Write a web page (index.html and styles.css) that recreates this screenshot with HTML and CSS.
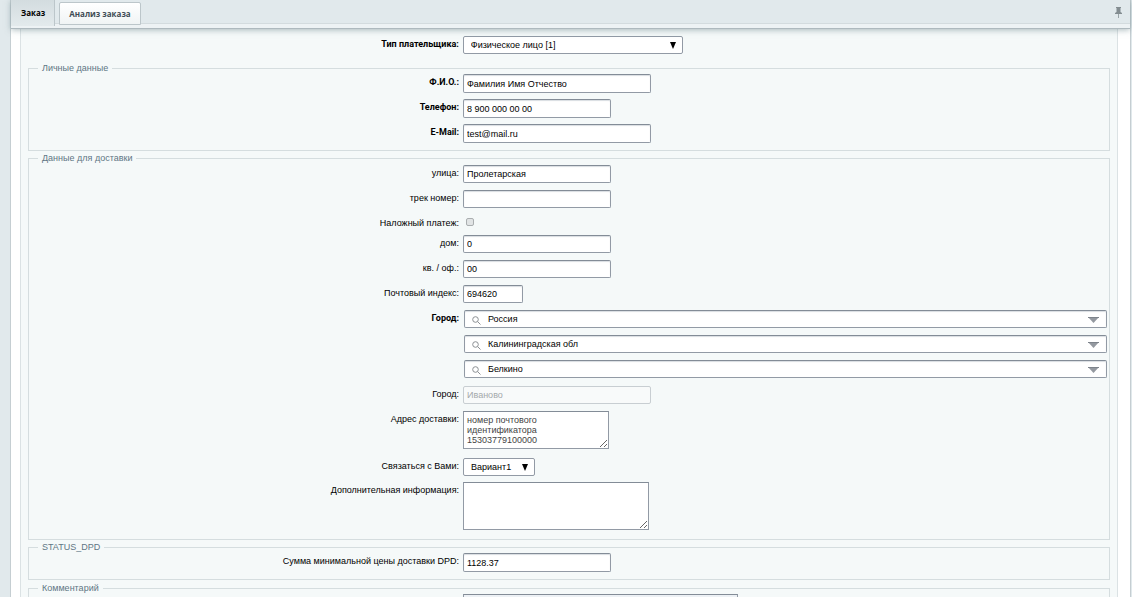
FILE: index.html
```html
<!DOCTYPE html>
<html lang="ru">
<head>
<meta charset="utf-8">
<title>Заказ</title>
<link rel="stylesheet" href="styles.css">
</head>
<body>
<div class="window">
  <header class="tabbar">
    <nav class="tabs">
      <button class="tab tab-active" type="button">Заказ</button>
      <button class="tab tab-plain" type="button">Анализ заказа</button>
    </nav>
    <button class="pin" type="button" aria-label="Закрепить">
      <svg width="8" height="12" viewBox="0 0 8 12"><path d="M1 0h5v1H5.500v4L7 6v1H0V6l1.500-1V1H1z" fill="#838d91"/><path d="M3 7h1v4H3z" fill="#9aa4a8"/></svg>
    </button>
  </header>
  <form class="panel">
    <div class="row row-payer">
      <label class="label strong" for="payer">Тип плательщика:</label>
      <div class="field">
        <span class="select w-payer">
          <select id="payer"><option>Физическое лицо [1]</option></select>
          <svg class="caret" width="6" height="7" viewBox="0 0 6 7"><path d="M0 0h6L3 7z"/></svg>
        </span>
      </div>
    </div>

    <fieldset class="group tall">
      <legend>Личные данные</legend>
      <div class="row"><label class="label strong" for="fio">Ф.И.О.:</label><div class="field"><input class="input w-long" id="fio" type="text" value="Фамилия Имя Отчество"></div></div>
      <div class="row"><label class="label strong" for="phone">Телефон:</label><div class="field"><input class="input w-mid" id="phone" type="tel" value="8 900 000 00 00"></div></div>
      <div class="row"><label class="label strong" for="mail">E-Mail:</label><div class="field"><input class="input w-long" id="mail" type="email" value="test@mail.ru"></div></div>
    </fieldset>

    <fieldset class="group group-delivery">
      <legend>Данные для доставки</legend>
      <div class="row"><label class="label" for="street">улица:</label><div class="field"><input class="input w-mid" id="street" type="text" value="Пролетарская"></div></div>
      <div class="row"><label class="label" for="track">трек номер:</label><div class="field"><input class="input w-mid" id="track" type="text"></div></div>
      <div class="row row-check"><label class="label" for="cod">Наложный платеж:</label><div class="field"><input class="check" id="cod" type="checkbox"></div></div>
      <div class="row"><label class="label" for="house">дом:</label><div class="field"><input class="input w-mid" id="house" type="text" value="0"></div></div>
      <div class="row"><label class="label" for="flat">кв. / оф.:</label><div class="field"><input class="input w-mid" id="flat" type="text" value="00"></div></div>
      <div class="row"><label class="label" for="zip">Почтовый индекс:</label><div class="field"><input class="input w-short" id="zip" type="text" value="694620"></div></div>
      <div class="row">
        <label class="label strong" for="country">Город:</label>
        <div class="field combos">
          <div class="combo">
            <svg class="lens" width="9" height="9" viewBox="0 0 9 9"><circle cx="3.5" cy="3.5" r="2.8"/><path d="M5.6 5.6L8.5 8.5"/></svg>
            <input id="country" type="text" value="Россия">
            <button type="button" aria-label="Открыть список стран"><svg width="11" height="6" viewBox="0 0 11 6"><path d="M0 0h11L5.500 6z" fill="#9499a0"/><path d="M0 0h11v1H0z" fill="#7d838b"/></svg></button>
          </div>
          <div class="combo">
            <svg class="lens" width="9" height="9" viewBox="0 0 9 9"><circle cx="3.5" cy="3.5" r="2.8"/><path d="M5.6 5.6L8.5 8.5"/></svg>
            <input aria-label="Область" type="text" value="Калининградская обл">
            <button type="button" aria-label="Открыть список областей"><svg width="11" height="6" viewBox="0 0 11 6"><path d="M0 0h11L5.500 6z" fill="#9499a0"/><path d="M0 0h11v1H0z" fill="#7d838b"/></svg></button>
          </div>
          <div class="combo">
            <svg class="lens" width="9" height="9" viewBox="0 0 9 9"><circle cx="3.5" cy="3.5" r="2.8"/><path d="M5.6 5.6L8.5 8.5"/></svg>
            <input aria-label="Населённый пункт" type="text" value="Белкино">
            <button type="button" aria-label="Открыть список городов"><svg width="11" height="6" viewBox="0 0 11 6"><path d="M0 0h11L5.500 6z" fill="#9499a0"/><path d="M0 0h11v1H0z" fill="#7d838b"/></svg></button>
          </div>
        </div>
      </div>
      <div class="row"><label class="label" for="city">Город:</label><div class="field"><input class="input w-long" id="city" type="text" value="Иваново" disabled></div></div>
      <div class="row row-address"><label class="label" for="address">Адрес доставки:</label><div class="field"><textarea class="area area-address" id="address">номер почтового идентификатора 15303779100000</textarea></div></div>
      <div class="row row-contact">
        <label class="label" for="contact">Связаться с Вами:</label>
        <div class="field">
          <span class="select w-contact">
            <select id="contact"><option>Вариант1</option></select>
            <svg class="caret" width="6" height="7" viewBox="0 0 6 7"><path d="M0 0h6L3 7z"/></svg>
          </span>
        </div>
      </div>
      <div class="row"><label class="label" for="extra">Дополнительная информация:</label><div class="field"><textarea class="area area-extra" id="extra"></textarea></div></div>
    </fieldset>

    <fieldset class="group group-status tall">
      <legend>STATUS_DPD</legend>
      <div class="row"><label class="label" for="dpd">Сумма минимальной цены доставки DPD:</label><div class="field"><input class="input w-mid" id="dpd" type="text" value="1128.37"></div></div>
    </fieldset>

    <fieldset class="group">
      <legend>Комментарий</legend>
      <div class="row"><span class="label"></span><div class="field"><textarea class="area area-comment" aria-label="Комментарий"></textarea></div></div>
    </fieldset>
  </form>
</div>
</body>
</html>
```
FILE: styles.css
```css
* { box-sizing: border-box; }

html { height: 100%; overflow: hidden; }

body {
  margin: 0;
  height: 100%;
  overflow: hidden;
  background: #e1e9ec;
  color: #000;
  font: 9px/10px "Liberation Sans", Arial, sans-serif;
}

input, select, textarea, button { font: inherit; color: inherit; margin: 0; }

.window {
  margin: 0 1px 0 10px;
  border: solid #c5ced2;
  border-width: 0 1px;
  background: #fff;
}

/* Tab strip */
.tabbar {
  position: relative;
  display: flex;
  justify-content: space-between;
  align-items: flex-start;
  height: 29px;
  background: linear-gradient(#e1e9ec 0, #e1e9ec 23px, #d3dbde 23px, #d3dbde 24px, #edf2f4 24px);
  border-bottom: 1px solid #aeb9be;
  box-shadow: 0 1px 6px rgba(90, 120, 125, 0.5);
}

.tabs { display: flex; gap: 4px; }

.tab {
  padding: 0 9px;
  border: 1px solid #bcc6ca;
  font: bold 8px/12px "Open Sans", sans-serif;
  color: #3f4b54;
}

.tab-active {
  height: 26px;
  padding-left: 10px;
  border-width: 0 1px 0 0;
  background: linear-gradient(#d3dcdf, #e3eaec);
  color: #000;
}

.tab-plain {
  height: 23px;
  margin-top: 2px;
  border-radius: 2px 2px 0 0;
  background: linear-gradient(#fff, #f0f4f5);
}

.pin {
  display: flex;
  margin: 7px 7px 0 0;
  padding: 0;
  border: 0;
  background: none;
}

/* Form */
.panel {
  margin: 0 12px 0 9px;
  padding: 7px 7px 20px;
  border: solid #dbe2e4;
  border-width: 0 1px;
  background: #f5f9f9;
}

.row {
  display: grid;
  grid-template-columns: 40% 1fr;
  min-height: 25px;
}

.label { padding: 3px 2px 0 0; text-align: right; }
.strong { font-family: Roboto, sans-serif; font-weight: bold; }
.field { padding-left: 2px; display: flex; align-items: flex-start; }

.row-payer { min-height: 27px; }

.group {
  margin: 0 0 2px;
  padding: 1px 0 7px;
  border: 1px solid #d5dddf;
  min-width: 0;
}

.group .row:last-child { min-height: 0; }
.group-delivery { padding: 2px 0 9px; }
.group-status { margin-bottom: 3px; }

legend {
  margin-left: 9px;
  padding: 0 4px;
  color: #5f7684;
}

.input {
  height: 18px;
  padding: 0 3px;
  border: 1px solid #929aa5;
  border-top-color: #838c97;
  border-radius: 2px;
  background: #fff;
  box-shadow: inset 0 1px 1px #d9dde1;
}

.tall .input { height: 19px; }

.input:disabled {
  border-color: #c8ced2;
  background: #f8fafa;
  color: #a4a9ab;
  box-shadow: none;
}

.w-long { width: 188px; }
.w-mid { width: 148px; }
.w-short { width: 60px; }
.w-payer { width: 220px; }
.w-contact { width: 72px; }

.select { display: grid; align-items: center; }
.select > * { grid-area: 1 / 1; }

.select select {
  appearance: none;
  width: 100%;
  height: 18px;
  padding: 0 7px;
  border: 1px solid #929aa5;
  border-radius: 2px;
  background: #fff;
}

.caret { justify-self: end; margin-right: 7px; pointer-events: none; }

.row-check { min-height: 20px; }

.check {
  appearance: none;
  width: 8px;
  height: 8px;
  margin: 3px 0 0 3px;
  border: 1px solid #aaaeb0;
  border-radius: 2px;
  background: #e1e4e5;
}

.combos {
  flex-direction: column;
  align-items: stretch;
  gap: 7px;
  padding: 0 2px 8px 3px;
}

.combo {
  display: flex;
  align-items: center;
  height: 18px;
  padding: 0 7px;
  border: 1px solid #929aa5;
  border-top-color: #838c97;
  border-radius: 2px;
  background: #fff;
  box-shadow: inset 0 1px 1px #d9dde1;
}

.combo input {
  flex: 1;
  min-width: 0;
  height: 16px;
  padding: 0 7px;
  border: 0;
  background: none;
  outline: 0;
}

.combo button { display: flex; padding: 1px 0 0; border: 0; background: none; }

.lens { margin-top: 2px; fill: none; stroke: #8b8f93; stroke-width: 1; }

.area {
  padding: 3px;
  border: 1px solid #929aa5;
  border-top-color: #838c97;
  background: #fff;
  color: #444;
  overflow: hidden;
  resize: both;
}

.area-address { width: 146px; height: 38px; padding-right: 40px; }
.area-extra { width: 186px; height: 48px; }
.area-comment { width: 275px; height: 60px; background: #edf1f5; }

.row-address { min-height: 47px; }
.row-contact { min-height: 24px; }
```
